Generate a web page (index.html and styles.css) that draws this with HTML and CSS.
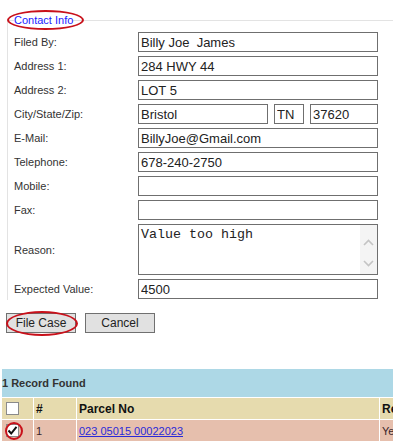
FILE: index.html
```html
<!DOCTYPE html>
<html>
<head>
<meta charset="utf-8">
<link rel="stylesheet" href="styles.css">
</head>
<body>
<div class="page">
  <fieldset class="contact">
    <legend class="legend"><span class="ring ring-legend"></span>Contact Info</legend>
    <div class="form">
      <label class="lbl">Filed By:</label>
      <input class="txt" type="text" value="Billy Joe  James">
      <label class="lbl">Address 1:</label>
      <input class="txt" type="text" value="284 HWY 44">
      <label class="lbl">Address 2:</label>
      <input class="txt" type="text" value="LOT 5">
      <label class="lbl">City/State/Zip:</label>
      <div class="csz">
        <input class="txt city" type="text" value="Bristol">
        <input class="txt state" type="text" value="TN">
        <input class="txt zip" type="text" value="37620">
      </div>
      <label class="lbl">E-Mail:</label>
      <input class="txt" type="text" value="BillyJoe@Gmail.com">
      <label class="lbl">Telephone:</label>
      <input class="txt" type="text" value="678-240-2750">
      <label class="lbl">Mobile:</label>
      <input class="txt" type="text" value="">
      <label class="lbl">Fax:</label>
      <input class="txt" type="text" value="">
      <label class="lbl">Reason:</label>
      <div class="ta-box">
        <textarea class="ta">Value too high</textarea>
        <div class="sb">
          <svg class="chev up" width="11" height="7" viewBox="0 0 11 7"><path d="M1 6 L5.5 1.5 L10 6" fill="none" stroke="#c4c4c4" stroke-width="1.6"/></svg>
          <svg class="chev down" width="11" height="7" viewBox="0 0 11 7"><path d="M1 1 L5.5 5.5 L10 1" fill="none" stroke="#c4c4c4" stroke-width="1.6"/></svg>
        </div>
      </div>
      <label class="lbl">Expected Value:</label>
      <input class="txt" type="text" value="4500">
    </div>
  </fieldset>

  <div class="actions">
    <button class="btn btn-file"><span class="ring ring-btn"></span>File Case</button>
    <button class="btn">Cancel</button>
  </div>

  <div class="results">
    <div class="found">1 Record Found</div>
    <table class="grid">
      <tr class="head">
        <td class="c1"><span class="cb"></span></td>
        <td class="c2">#</td>
        <td class="c3">Parcel No</td>
        <td class="c4">Reason</td>
      </tr>
      <tr class="row">
        <td class="c1"><span class="cb checked"><svg width="11" height="11" viewBox="0 0 11 11"><path d="M1.5 5.5 L4.2 8.5 L9.5 1.8" fill="none" stroke="#111" stroke-width="2"/></svg><span class="ring ring-cb"></span></span></td>
        <td class="c2">1</td>
        <td class="c3"><a href="#" class="lnk">023 05015 00022023</a></td>
        <td class="c4">Yes</td>
      </tr>
    </table>
  </div>
</div>
</body>
</html>
```
FILE: styles.css
```css
html, body {
  margin: 0;
  padding: 0;
  background: #fff;
  overflow: hidden;
}
body {
  font-family: "Liberation Sans", Arial, sans-serif;
  color: #333;
}
.page {
  padding-top: 13px;
}
.contact {
  margin: 0 0 0 7px;
  padding: 5px 0 1px 6px;
  border: 1px solid #e3e3e3;
  border-right: none;
  border-bottom: none;
}
.legend {
  position: relative;
  padding: 0;
  font-size: 11px;
  line-height: 14px;
  color: #1a1aff;
}
.ring {
  position: absolute;
  border: 2px solid #c8101a;
  border-radius: 50%;
  box-sizing: border-box;
  pointer-events: none;
}
.ring-legend {
  left: -7px;
  top: -3px;
  width: 77px;
  height: 20px;
}
.form {
  display: grid;
  grid-template-columns: 124px 240px;
  row-gap: 4px;
  align-items: center;
}
.lbl {
  font-size: 11px;
  color: #333;
}
.txt {
  box-sizing: border-box;
  height: 20px;
  width: 240px;
  margin: 0;
  padding: 0 2px;
  border: 1px solid #6f6f6f;
  font-family: "Liberation Sans", Arial, sans-serif;
  font-size: 13px;
  color: #222;
  background: #fff;
  outline: none;
}
.csz {
  display: flex;
  height: 20px;
}
.csz .city { width: 130px; }
.csz .state { width: 30px; margin-left: 6px; }
.csz .zip { width: 68px; margin-left: 6px; }
.ta-box {
  box-sizing: border-box;
  display: flex;
  width: 240px;
  height: 51px;
  border: 1px solid #6f6f6f;
  background: #fff;
}
.ta {
  flex: 1;
  margin: 0;
  border: none;
  padding: 2px 2px;
  resize: none;
  outline: none;
  font-family: "Liberation Mono", "Courier New", monospace;
  font-size: 13.33px;
  line-height: 15px;
  color: #222;
  overflow: hidden;
}
.sb {
  width: 17px;
  background: #f4f4f4;
  display: flex;
  flex-direction: column;
  align-items: center;
  padding-top: 14px;
}
.chev.down {
  margin-top: 14px;
}
.actions {
  display: flex;
  gap: 9px;
  padding-left: 6px;
  margin-top: 13px;
}
.btn {
  position: relative;
  box-sizing: border-box;
  width: 70px;
  height: 20px;
  margin: 0;
  padding: 0;
  border: 1px solid #707070;
  background: #e1e1e1;
  font-family: "Liberation Sans", Arial, sans-serif;
  font-size: 12px;
  color: #222;
}
.ring-btn {
  left: -1px;
  top: -3px;
  width: 72px;
  height: 25px;
}
.results {
  margin-top: 36px;
  padding-left: 2px;
}
.found {
  height: 28px;
  line-height: 28px;
  background: #add8e6;
  font-size: 11px;
  font-weight: bold;
  color: #333;
}
.grid {
  border-collapse: separate;
  border-spacing: 1px;
  margin-left: -1px;
  width: 480px;
  table-layout: fixed;
}
.grid td {
  padding: 0 0 0 2px;
  height: 21px;
  font-size: 11px;
  white-space: nowrap;
  overflow: hidden;
}
.grid .c1 { width: 27px; padding-left: 4px; }
.grid .c2 { width: 40px; }
.grid .c3 { width: 300px; }
.grid .c4 { width: 100px; }
.head td {
  background: #e6dbae;
  font-size: 12px;
  font-weight: bold;
  color: #111;
}
.row td {
  background: #e6bfad;
  color: #3a1f2a;
}
.cb {
  position: relative;
  display: block;
  box-sizing: border-box;
  width: 13px;
  height: 13px;
  border: 1px solid #8a8a8a;
  background: #fff;
}
.cb svg {
  display: block;
  position: absolute;
  left: 0;
  top: 0;
}
.ring-cb {
  left: -2px;
  top: -3px;
  width: 18px;
  height: 18px;
}
.lnk {
  color: #2a2ad8;
  text-decoration: underline;
}
```
